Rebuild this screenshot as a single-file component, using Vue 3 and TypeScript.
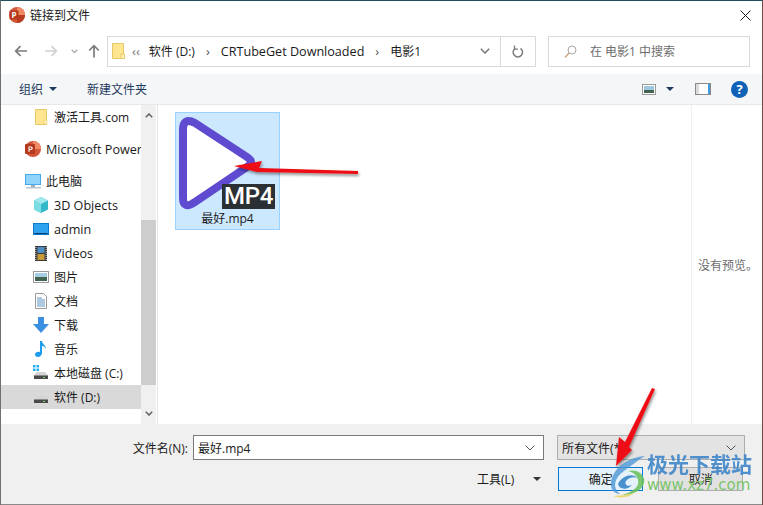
<template>
  <div class="dialog">
    <!-- Title bar -->
    <header class="titlebar">
      <svg class="app-icon" width="16" height="16" viewBox="0 0 16 16">
        <circle cx="8" cy="8" r="8" fill="#d2563a" />
        <path d="M8 0a8 8 0 0 1 8 8H8z" fill="#ef8a63" />
        <path d="M8 16a8 8 0 0 0 8-8H8z" fill="#b83c22" />
        <rect x="0.5" y="3.5" width="9" height="9" rx="1" fill="#b7391d" />
        <text x="5" y="11" class="app-icon__p">P</text>
      </svg>
      <span class="titlebar__text">链接到文件</span>
      <svg class="close" width="11" height="11" viewBox="0 0 11 11">
        <path d="M.5.5l10 10M10.5.5l-10 10" stroke="#1a1a1a" stroke-width="1" fill="none" />
      </svg>
    </header>

    <!-- Navigation -->
    <div class="nav">
      <div class="nav__buttons">
        <svg width="14" height="12" viewBox="0 0 14 12">
          <path d="M13 6H2M6.5 1.2L1.700 6l4.800 4.800" stroke="#7b7b7b" stroke-width="1.700" fill="none" />
        </svg>
        <svg width="14" height="12" viewBox="0 0 14 12">
          <path d="M1 6h11M7.500 1.200L12.300 6l-4.800 4.800" stroke="#d0d0d0" stroke-width="1.700" fill="none" />
        </svg>
        <svg width="7" height="5" viewBox="0 0 7 5">
          <path d="M.7.8l2.800 2.800L6.300.8" stroke="#a8a8a8" stroke-width="1.300" fill="none" />
        </svg>
        <svg width="12" height="14" viewBox="0 0 12 14">
          <path d="M6 13.500V2M1.200 6.500L6 1.700l4.800 4.800" stroke="#7b7b7b" stroke-width="1.700" fill="none" />
        </svg>
      </div>
      <div class="address">
        <svg class="address__folder" width="13" height="16" viewBox="0 0 13 16">
          <path d="M.5.5h11v15H.5z" fill="#fde68f" stroke="#e8c765" />
          <path d="M9 11h3.500v4.500H9z" fill="#fff3bd" stroke="#e8c765" />
        </svg>
        <span class="address__chev">‹‹</span>
        <span class="crumb">软件 (D:)</span>
        <span class="address__sep">›</span>
        <span class="crumb crumb--latin">CRTubeGet Downloaded</span>
        <span class="address__sep">›</span>
        <span class="crumb">电影1</span>
        <svg class="address__drop" width="10" height="6" viewBox="0 0 10 6">
          <path d="M.8.8L5 5l4.200-4.200" stroke="#777" stroke-width="1.500" fill="none" />
        </svg>
        <div class="address__refresh">
          <svg width="12" height="13" viewBox="0 0 12 13">
            <path d="M8.500 3.300a4.700 4.700 0 1 1-5.300 0" stroke="#7b7b7b" stroke-width="1.500" fill="none" />
            <path d="M2.500 .6v3.500h3.500" stroke="#7b7b7b" stroke-width="1.300" fill="none" />
          </svg>
        </div>
      </div>
      <div class="search">
        <svg width="13" height="13" viewBox="0 0 13 13">
          <circle cx="8" cy="5" r="4" stroke="#a9a9a9" fill="none" />
          <path d="M5 8l-4 4.500" stroke="#c9a27a" stroke-width="1.200" />
        </svg>
        <span>在 电影1 中搜索</span>
      </div>
    </div>

    <!-- Toolbar -->
    <div class="toolbar">
      <span class="toolbar__item">组织 <i class="caret" /></span>
      <span class="toolbar__item toolbar__new">新建文件夹</span>
      <div class="toolbar__right">
        <svg width="14" height="11" viewBox="0 0 14 11">
          <rect x=".5" y=".5" width="13" height="10" fill="#fff" stroke="#9a9a9a" />
          <rect x="2" y="2" width="10" height="4" fill="#9fc8e0" />
          <rect x="2" y="6" width="10" height="3" fill="#40624e" />
        </svg>
        <i class="caret caret--views" />
        <svg class="pane-icon" width="16" height="12" viewBox="0 0 16 12">
          <rect x=".5" y=".5" width="15" height="11" fill="#fff" stroke="#8a8a8a" />
          <rect x="1" y="1" width="3" height="10" fill="#dcdcdc" />
          <rect x="13" y="1" width="2" height="10" fill="#3d9be0" />
        </svg>
        <svg class="help-icon" width="17" height="17" viewBox="0 0 17 17">
          <circle cx="8.500" cy="8.500" r="8.500" fill="#0f62b8" />
          <text x="8.500" y="13" class="help-icon__q">?</text>
        </svg>
      </div>
    </div>

    <!-- Main area -->
    <div class="main">
      <aside class="sidebar">
        <ul class="tree">
          <li v-for="row in rows" :key="row.label" class="tree__row"
            :class="{ 'tree__row--top': row.top, 'tree__row--active': row.active, 'tree__row--spaced': row.spaced }">
            <svg width="16" height="16" viewBox="0 0 16 16" class="tree__icon" v-html="row.icon"></svg>
            <span class="tree__label" :class="{ 'tree__label--latin': row.latin }">{{ row.label }}</span>
          </li>
        </ul>
        <div class="scroll">
          <svg width="8" height="5" viewBox="0 0 8 5"><path d="M.8 4.200L4 1l3.200 3.200" stroke="#606060" stroke-width="1.500" fill="none" /></svg>
          <div class="scroll__track"><div class="scroll__thumb"></div></div>
          <svg width="8" height="5" viewBox="0 0 8 5"><path d="M.8.8L4 4 7.200.8" stroke="#606060" stroke-width="1.500" fill="none" /></svg>
        </div>
      </aside>

      <section class="files">
        <div class="file">
          <svg class="file__thumb" width="103" height="98" viewBox="0 0 103 98">
            <path d="M7 17Q7 4 19 10L71 44Q79 49 71 54L19 89Q7 97 7 85Z" fill="#fff" stroke="#5f4bd0" stroke-width="8" stroke-linejoin="round" />
          </svg>
          <span class="file__badge">MP4</span>
          <span class="file__name">最好.mp4</span>
        </div>
      </section>

      <section class="preview">没有预览。</section>
    </div>

    <!-- Footer -->
    <footer class="footer">
      <div class="footer__row">
        <label class="footer__label">文件名(N):</label>
        <div class="field">最好.mp4
          <svg width="10" height="6" viewBox="0 0 10 6"><path d="M.6.6L5 5 9.400.6" stroke="#555" fill="none" /></svg>
        </div>
        <div class="filter">所有文件(*
          <svg width="10" height="6" viewBox="0 0 10 6"><path d="M.6.6L5 5 9.400.6" stroke="#555" fill="none" /></svg>
        </div>
      </div>
      <div class="footer__row footer__row--actions">
        <span class="tools">工具(L)</span>
        <i class="caret caret--tools" />
        <button class="btn btn--primary">确定</button>
        <button class="btn">取消</button>
      </div>
    </footer>

    <!-- Annotations drawn over the screenshot -->
    <div class="watermark">
      <svg class="watermark__logo" width="58" height="50" viewBox="0 0 58 50">
        <path d="M41 2C26 3 10 12 7 28C6 35 10 40 16 40C8 34 10 24 20 17C27 12 34 6 41 2Z" fill="#4c97d6" opacity=".8" />
        <path d="M24 17C36 14 42 24 40 29C38 37 28 41 18 41C28 38 36 33 34 26C33 21 29 18 24 17Z" fill="#67bf57" opacity=".85" />
        <path d="M14 30C18 21 30 19 33 24C30 22 24 24 22 27C20 31 24 33 28 31C24 36 15 36 14 30Z" fill="#2f7fc4" opacity=".85" />
        <path d="M10 42C16 41 22 42 30 39C26 43 16 45 10 42Z" fill="#e9d257" opacity=".85" />
      </svg>
      <div class="watermark__text">
        <span class="watermark__cn">极光下载站</span>
        <span class="watermark__url">www.xz7.com</span>
      </div>
    </div>
    <svg class="marks" width="763" height="505" viewBox="0 0 763 505">
      <defs>
        <filter id="shadow" x="-20%" y="-20%" width="140%" height="140%">
          <feDropShadow dx="1" dy="2" stdDeviation="1.500" flood-color="#000" flood-opacity=".45" />
        </filter>
      </defs>
      <g filter="url(#shadow)" fill="#ee0f12">
        <path d="M234 166L262 161L259 168L358 171L358 174L258 172L257 172Z" />
        <path d="M652 388L655 389L629 447L632 450L616 466L619 437L625 442Z" />
      </g>
    </svg>
  </div>
</template>

<script setup lang="ts">
interface TreeRow {
  label: string
  icon: string
  top?: boolean
  active?: boolean
  spaced?: boolean
  latin?: boolean
}

const driveIcon = (dots: string) =>
  `${dots}<path d="M2 9l2-2h8l2 2v2H2z" fill="#d4d4d4"/><path d="M1 10h14v4H1z" fill="#4a4a4a"/><rect x="1" y="10" width="14" height="1" fill="#8c8c8c"/><rect x="10" y="12" width="2" height="1" fill="#5fe05f"/>`

const rows: TreeRow[] = [
  { label: '激活工具.com', icon: '<path d="M2.500.5h11v15h-11z" fill="#fde68f" stroke="#e8c765"/><path d="M11 11h3v4h-3z" fill="#fff3bd" stroke="#e8c765" stroke-width=".6"/>' },
  {
    label: 'Microsoft PowerPoint',
    top: true,
    spaced: true,
    latin: true,
    icon: '<circle cx="8" cy="8" r="8" fill="#d2563a"/><path d="M8 0a8 8 0 0 1 8 8H8z" fill="#ef8a63"/><rect y="3" width="10" height="10" rx="1" fill="#b7391d"/><path d="M3.500 5.500h2.500a1.700 1.700 0 0 1 0 3.500H4.500v2h-1z M4.500 6.500V8H6a.8.8 0 0 0 0-1.500z" fill="#fff" fill-rule="evenodd"/>',
  },
  {
    label: '此电脑',
    top: true,
    spaced: true,
    icon: '<rect y="1" width="16" height="11" fill="#47a9ea"/><rect x="1" y="2" width="14" height="9" fill="#8fd5fb"/><rect x="6" y="12" width="4" height="2" fill="#9ab0bd"/><rect x="1" y="14" width="15" height="1.500" fill="#b9c6cf"/>',
  },
  { label: '3D Objects', latin: true, icon: '<path d="M8 0l7 3.500v9L8 16l-7-3.500v-9z" fill="#33b7c9"/><path d="M8 0l7 3.500L8 7 1 3.500z" fill="#9fe9ef"/><path d="M1 3.500L8 7v9l-7-3.500z" fill="#7cdde4"/>' },
  { label: 'admin', latin: true, icon: '<rect y="2" width="16" height="12" fill="#0e78c9"/><rect x="1" y="3" width="14" height="9" fill="#2fa3ee"/><rect x="2" y="12" width="12" height="1" fill="#083f70"/>' },
  { label: 'Videos', latin: true, icon: '<rect x="2" y="1" width="12" height="15" fill="#3b3b3b"/><rect x="4.500" y="2" width="7" height="6" fill="#4f8ec4"/><rect x="4.500" y="9" width="7" height="6" fill="#c79a3a"/><path d="M2.800 2v13M13.200 2v13" stroke="#ddd" stroke-width="1" stroke-dasharray="1 1"/>' },
  { label: '图片', icon: '<rect x=".5" y="2.500" width="15" height="11" fill="#fff" stroke="#9a9a9a"/><rect x="2" y="4" width="12" height="5" fill="#a5cde3"/><rect x="2" y="8" width="12" height="4" fill="#42634f"/>' },
  { label: '文档', icon: '<path d="M2.500.5h8l3 3v12h-11z" fill="#fff" stroke="#9a9a9a"/><path d="M4 5h5M4 7h8M4 9h8M4 11h8M4 13h8" stroke="#5f93c0"/>' },
  { label: '下载', icon: '<path d="M5 0h6v7h5l-8 9-8-9h5z" fill="#3b8fe0"/>' },
  { label: '音乐', icon: '<path d="M7 0h2c0 3 4 4 4 8-1-2-2-3-4-3v7c0 2-2 4-4 4s-3-1-3-2.500S4 10 7 11z" fill="#1f9cf0"/>' },
  { label: '本地磁盘 (C:)', icon: driveIcon('<path d="M0 0h2.500v2.500H0zM3.500 0H6v2.500H3.500zM0 3.500h2.500V6H0zM3.500 3.500H6V6H3.500z" fill="#1fb0ee"/>') },
  { label: '软件 (D:)', active: true, icon: driveIcon('') },
]
</script>

<style>
html,
body {
  margin: 0;
  overflow: hidden;
}
</style>

<style scoped>
.dialog {
  position: relative;
  width: 763px;
  height: 505px;
  box-sizing: border-box;
  display: flex;
  flex-direction: column;
  overflow: hidden;
  background: #fff;
  border-top: 1px solid #1f4f5c;
  border-left: 1px solid #707070;
  border-right: 1px solid #6e4a40;
  font-family: "Open Sans", "Noto Sans CJK SC", sans-serif;
  font-size: 12px;
  color: #1a1a1a;
}

.titlebar {
  height: 28px;
  flex: none;
  display: flex;
  align-items: center;
  padding: 0 11px 0 8px;
}

.titlebar__text {
  margin-left: 5px;
  font-size: 12px;
}

.app-icon__p {
  font-size: 8px;
  font-weight: 700;
  fill: #fff;
  text-anchor: middle;
}

.close {
  margin-left: auto;
}

.nav {
  height: 45px;
  flex: none;
  box-sizing: border-box;
  display: flex;
  align-items: center;
  padding-bottom: 1px;
}

.nav__buttons {
  width: 106px;
  flex: none;
  display: flex;
  align-items: center;
  padding-left: 13px;
  box-sizing: border-box;
}

.nav__buttons svg:nth-child(2) {
  margin-left: 16px;
}

.nav__buttons svg:nth-child(3) {
  margin-left: 13px;
}

.nav__buttons svg:nth-child(4) {
  margin-left: 10px;
}

.address {
  width: 429px;
  height: 31px;
  flex: none;
  box-sizing: border-box;
  border: 1px solid #d9d9d9;
  display: flex;
  align-items: center;
  padding-left: 4px;
}

.address__chev {
  margin: 0 9px 0 7px;
  color: #777;
  font-size: 13px;
  line-height: 1;
}

.address__sep {
  margin: 0 11px;
  color: #555;
  font-size: 13px;
  line-height: 1;
}

.crumb {
  font-size: 12px;
  white-space: nowrap;
}

.crumb--latin {
  font-size: 12.6px;
}

.address__drop {
  margin-left: auto;
  margin-right: 10px;
}

.address__refresh {
  width: 34px;
  height: 100%;
  flex: none;
  display: flex;
  align-items: center;
  justify-content: center;
  border-left: 1px solid #d9d9d9;
}

.search {
  width: 202px;
  height: 31px;
  flex: none;
  margin-left: 12px;
  box-sizing: border-box;
  border: 1px solid #d9d9d9;
  display: flex;
  align-items: center;
  padding-left: 15px;
  gap: 13px;
  color: #6d6d6d;
}

.toolbar {
  height: 30px;
  flex: none;
  display: flex;
  align-items: center;
  padding-left: 18px;
  background: #f5f6f7;
  color: #1e3a5f;
}

.toolbar__item {
  display: flex;
  align-items: center;
  gap: 6px;
}

.toolbar__new {
  margin-left: 30px;
}

.caret {
  display: inline-block;
  width: 0;
  height: 0;
  border-left: 4px solid transparent;
  border-right: 4px solid transparent;
  border-top: 4px solid #1e3a5f;
}

.toolbar__right {
  margin-left: auto;
  display: flex;
  align-items: center;
  padding-right: 14px;
}

.caret--views {
  margin-left: 10px;
}

.pane-icon {
  margin-left: 21px;
}

.help-icon {
  margin-left: 20px;
}

.help-icon__q {
  font-size: 13px;
  font-weight: 700;
  fill: #fff;
  text-anchor: middle;
}

.main {
  flex: 1;
  min-height: 0;
  display: flex;
  border-top: 1px solid #e8e8e8;
}

.sidebar {
  width: 156px;
  flex: none;
  display: flex;
  border-right: 1px solid #e4e4e4;
  overflow: hidden;
}

.tree {
  flex: 1;
  min-width: 0;
  list-style: none;
  margin: 0;
  padding: 0;
  overflow: hidden;
}

.tree__row {
  height: 24px;
  display: flex;
  align-items: center;
  padding-left: 32px;
  gap: 5px;
  white-space: nowrap;
}

.tree__row--top {
  padding-left: 24px;
}

.tree__row--spaced {
  margin-top: 8px;
}

.tree__row--active {
  background: #d9d9d9;
}

.tree__icon {
  flex: none;
}

.tree__label {
  font-size: 12px;
}

.tree__label--latin {
  font-size: 12.6px;
}

.scroll {
  width: 15px;
  flex: none;
  margin-right: 1px;
  display: flex;
  flex-direction: column;
  align-items: center;
  background: #f0f0f0;
  padding: 8px 0;
  box-sizing: border-box;
}

.scroll__track {
  flex: 1;
  width: 100%;
  padding-top: 102px;
  padding-bottom: 26px;
  box-sizing: border-box;
}

.scroll__thumb {
  height: 100%;
  background: #cdcdcd;
}

.files {
  flex: 1;
  min-width: 0;
  padding: 7px 0 0 17px;
  border-right: 1px solid #f0f0f0;
}

.file {
  position: relative;
  width: 105px;
  height: 118px;
  box-sizing: border-box;
  background: #cce8ff;
  border: 1px solid #99d1ff;
  display: flex;
  flex-direction: column;
  align-items: center;
}

.file__thumb {
  flex: none;
}

.file__badge {
  position: absolute;
  left: 46px;
  top: 71px;
  width: 53px;
  height: 25px;
  background: #2b3035;
  color: #fff;
  font-family: "Roboto", sans-serif;
  font-size: 24px;
  font-weight: 500;
  line-height: 25px;
  letter-spacing: -.3px;
  text-align: center;
}

.file__name {
  font-size: 12px;
  line-height: 16px;
}

.preview {
  width: 70px;
  flex: none;
  box-sizing: border-box;
  padding: 151px 0 0 6px;
  color: #6d6d6d;
  white-space: nowrap;
}

.footer {
  height: 81px;
  flex: none;
  background: #f0f0f0;
  display: flex;
  flex-direction: column;
  border-bottom: 1px solid #8a8a8a;
  box-sizing: border-box;
}

.footer__row {
  display: flex;
  align-items: center;
  height: 25px;
  margin-top: 11px;
}

.footer__row--actions {
  margin-top: 7px;
  height: 24px;
}

.footer__label {
  width: 192px;
  text-align: right;
  padding-right: 5px;
  box-sizing: border-box;
}

.field {
  width: 351px;
  height: 25px;
  box-sizing: border-box;
  background: #fff;
  border: 1px solid #7a7a7a;
  display: flex;
  align-items: center;
  justify-content: space-between;
  padding: 0 8px 0 4px;
}

.filter {
  width: 188px;
  height: 25px;
  margin-left: 13px;
  box-sizing: border-box;
  background: #e3e3e3;
  border: 1px solid #adadad;
  display: flex;
  align-items: center;
  justify-content: space-between;
  padding: 0 8px 0 4px;
}

.tools {
  margin-left: 476px;
}

.caret--tools {
  margin-left: 19px;
  border-top-color: #333;
}

.btn {
  width: 85px;
  height: 24px;
  box-sizing: border-box;
  background: #e1e1e1;
  border: 1px solid #adadad;
  font: inherit;
  color: inherit;
  padding: 0;
}

.btn--primary {
  margin-left: 17px;
  background: #e5f1fb;
  border: 1px solid #0078d7;
  margin-right: 15px;
}

.marks {
  position: absolute;
  left: -1px;
  top: -1px;
  pointer-events: none;
}

.watermark {
  position: absolute;
  left: 603px;
  top: 453px;
  display: flex;
}

.watermark__logo {
  position: absolute;
  left: 0;
  top: 0;
}

.watermark__text {
  display: flex;
  flex-direction: column;
  margin-left: 43px;
  margin-top: -2px;
}

.watermark__cn {
  font-size: 21px;
  line-height: 25px;
  font-weight: 700;
  color: #3f86c9;
  opacity: .9;
  white-space: nowrap;
}

.watermark__url {
  font-family: "DejaVu Sans", sans-serif;
  font-size: 15px;
  line-height: 17px;
  color: #7cc56c;
  white-space: nowrap;
}
</style>
